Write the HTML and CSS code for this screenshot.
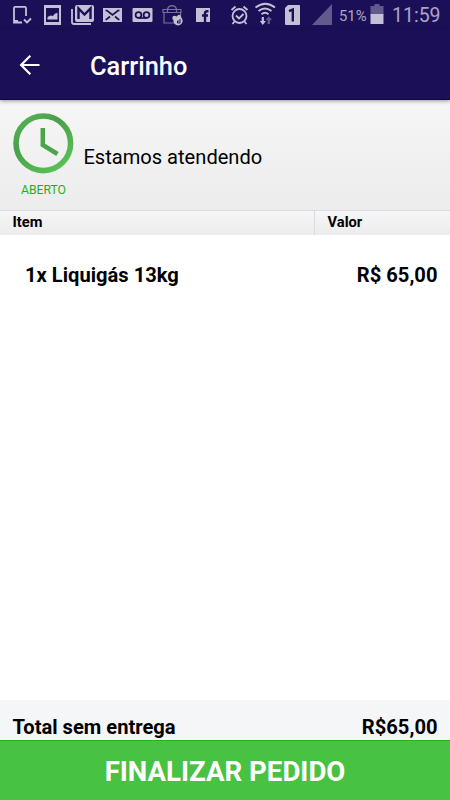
FILE: index.html
```html
<!DOCTYPE html>
<html lang="pt-BR">
<head>
<meta charset="utf-8">
<title>Carrinho</title>
<link rel="stylesheet" href="styles.css">
</head>
<body>
<div class="app">
  <div class="status">
    <svg width="37" height="30" viewBox="0 0 37 30"><path d="M26 16V8a1.200 1.200 0 0 0-1.200-1.200h-9.600A1.200 1.200 0 0 0 14 8v14.500h8M14 21h4M24 19.500l3 3 4-4" class="line"/></svg>
    <svg width="29" height="30" viewBox="37 0 29 30"><path fill-rule="evenodd" d="M44 5h17v20H44zM46 8v14h13V8z"/><path d="M47.500 19.500v-2.500l3-1.500 2.500.5 2-2.500h1l1.500-1v7z"/></svg>
    <svg width="32" height="30" viewBox="66 0 32 30"><path d="M72 9v13q0 2 2 2h17" class="line"/><rect x="75" y="5" width="19" height="17" rx="2"/><path d="M78.500 19V8.500l6 6 6-6V19" class="cut thick"/></svg>
    <svg width="29" height="30" viewBox="98 0 29 30"><path d="M103 8h19v14h-19z"/><path d="M105.500 10.500h1.500l5.500 4.500 5.500-4.500h1.500M105.500 19.500h1l3.500-3M119.500 19.500h-1L115 16.500" class="cut"/></svg>
    <svg width="30" height="30" viewBox="127 0 30 30"><rect x="132.500" y="8" width="20" height="14" rx="1"/><path d="M138.500 18h8" class="cut"/><circle cx="138.500" cy="15" r="2.900" class="cut"/><circle cx="146.500" cy="15" r="2.900" class="cut"/></svg>
    <svg width="33" height="30" viewBox="157 0 33 30"><g class="thin"><path d="M164 12.500v10.500h12M163 12.500v-3h18v3zM167.500 12V9q1-3 4.500-3.300 3.500.3 4.500 3.300v3M180.500 12.500v5"/></g><circle cx="178" cy="20.800" r="4.600"/><circle cx="174.500" cy="18" r="2.200"/><circle cx="179" cy="16.500" r="1.800"/><path d="M180 19v4h-2.500v-2h2" class="cut small"/></svg>
    <svg width="30" height="30" viewBox="190 0 30 30"><path d="M196 8h14v14h-14z"/><path d="M208.500 11.200h-1.500q-2 0-2 2.300V22M202 15.500h6" class="cut thick"/></svg>
    <svg width="32" height="30" viewBox="220 0 32 30"><g class="line"><circle cx="239.500" cy="16" r="7"/><path d="M231.500 10l4-3.500M247.500 10l-4-3.500M234.500 21.500L232.500 24M244.500 21.500l2 2.500M236 15.500l3 3 4.500-4.500"/></g></svg>
    <svg width="28" height="30" viewBox="252 0 28 30"><g class="line"><path d="M255.500 7.500q10-7.500 19.500 0M258.500 11q6.500-5 13 0M261.500 14.300q3.500-3 7 0"/></g><path d="M261.700 17h2.200v4h2L262.800 25l-3-4h1.900z"/><path class="dim" d="M267.600 24v-4h-2l3.200-3.700 3.200 3.700h-2v4z"/></svg>
    <svg width="26" height="30" viewBox="280 0 26 30"><path d="M288 5h11q1 0 1 1v18q0 1-1 1h-13q-1 0-1-1V8z"/><path d="M289 11.200l3.800-1.700V21.500" class="cut sim"/></svg>
    <svg width="31" height="30" viewBox="306 0 31 30"><path class="dim" d="M332 4v21h-20z"/></svg>
    <span class="percent">51%</span>
    <svg width="18" height="30" viewBox="368 0 18 30"><path class="dim" d="M370.500 6h4V4h5v2h4v9h-13z"/><path d="M370.500 14h13v10h-13z"/></svg>
    <span class="clock">11:59</span>
  </div>
  <header class="bar">
    <svg class="back" width="22" height="22" viewBox="0 0 22 22"><path d="M20.500 11H3M11.300 1.800L2.100 11l9.200 9.200"/></svg>
    <h1>Carrinho</h1>
  </header>
  <section class="open">
    <div class="badge">
      <svg width="62" height="62" viewBox="0 0 62 62">
        <defs><linearGradient id="ring" x2=".7" y2="1"><stop stop-color="#56b653"/><stop offset=".4" stop-color="#4b9f4b"/><stop offset="1" stop-color="#58bf54"/></linearGradient></defs>
        <circle cx="31.300" cy="31.300" r="27.300" fill="none" stroke="url(#ring)" stroke-width="5.600"/>
        <path d="M30.800 16v17L45.500 42" fill="none" stroke="#4ca54b" stroke-width="4.500"/>
      </svg>
      <span>ABERTO</span>
    </div>
    <p>Estamos atendendo</p>
  </section>
  <div class="columns"><span>Item</span><span>Valor</span></div>
  <main><div class="item"><span>1x Liquigás 13kg</span><span>R$ 65,00</span></div></main>
  <div class="total"><span>Total sem entrega</span><span>R$65,00</span></div>
  <button class="finish">FINALIZAR PEDIDO</button>
</div>
</body>
</html>
```
FILE: styles.css
```css
* { box-sizing: border-box; }
body { margin: 0; font-family: Roboto, "Liberation Sans", sans-serif; color: #000; }
.app { width: 450px; height: 800px; display: flex; flex-direction: column; background: #fff; overflow: hidden; }
.status { height: 30px; flex: none; display: flex; background: #1b1058; color: #aaa6c5; line-height: 32px; white-space: nowrap; }
.status svg { flex: none; fill: #c4c1d7; }
.status .line { fill: none; stroke: #c4c1d7; stroke-width: 1.8; }
.status .thin { fill: none; stroke: #777096; stroke-width: 1.2; }
.status .cut { fill: none; stroke: #1b1058; stroke-width: 1.7; }
.status .thick { stroke-width: 2.4; }
.status .sim { stroke-width: 2.4; }
.status .small { stroke-width: 1; }
.status .dim { fill: #625a8c; }
.percent { width: 31px; padding-left: 2px; font-size: 14.8px; }
.clock { padding-left: 6px; font-size: 19.5px; }
.bar { height: 70px; flex: none; display: flex; align-items: center; padding-left: 19px; background: #1b1058; border-bottom: 1px solid #120743; color: #fff; box-shadow: 0 1px 4px rgba(0, 0, 0, .4); z-index: 1; }
.back { fill: none; stroke: #fff; stroke-width: 2.2; }
.bar h1 { margin: 3px 0 0 49px; font-size: 25.4px; font-weight: 500; line-height: 30px; }
.open { height: 110px; flex: none; display: flex; align-items: center; padding-left: 12px; background: linear-gradient(#f6f6f6, #ececec); }
.badge { width: 63px; display: flex; flex-direction: column; align-items: flex-start; padding-bottom: 1px; }
.badge span { margin: 8px 0 -1px 9px; font-size: 12.2px; line-height: 16px; color: #13b913; }
.open p { margin: 3px 0 0 8.4px; font-size: 20.1px; line-height: 24px; }
.columns { height: 25px; flex: none; display: grid; grid-template-columns: 315px 1fr; border-top: 1px solid #dadae5; background: linear-gradient(#f6f6f6, #ececec); font-size: 14.7px; font-weight: 700; line-height: 23px; }
.columns span { padding-left: 12.5px; }
.columns span:first-child { border-right: 1px solid #dadae5; }
main { flex: 1; padding: 28px 12.5px 0 25px; }
.item, .total { display: flex; justify-content: space-between; font-size: 20.15px; line-height: 24px; font-weight: 700; }
.total { height: 40px; flex: none; padding: 15px 12.5px 0 12.5px; background: #f5f6f8; }
.finish { height: 60px; flex: none; border: 0; border-top: 1px solid #1fb513; padding: 2px 0 0; background: #48c242; color: #fff; font: 700 27.6px Roboto, sans-serif; }
```
